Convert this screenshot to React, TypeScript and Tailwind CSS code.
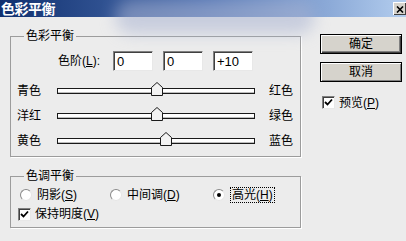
import React from "react";

const font = { fontFamily: "'Liberation Sans', 'Noto Sans CJK SC', sans-serif" };

function U({ c }: { c: string }) {
  return <span className="underline underline-offset-[1px]">{c}</span>;
}

function Input({ v }: { v: string }) {
  return (
    <div className="w-[40px] h-[20px] bg-white border border-t-[#808080] border-l-[#808080] border-b-[#e8e8e8] border-r-[#e8e8e8] shadow-[inset_1px_1px_0_#404040] flex items-center pl-[3px] text-[13px] leading-none text-black">
      {v}
    </div>
  );
}

function Slider({ left, right, value }: { left: string; right: string; value: number }) {
  const w = 198;
  const center = ((value + 100) / 200) * w;
  return (
    <div className="h-[25px] flex items-center">
      <div className="w-[46px] pl-[6px] text-[12px] leading-none">{left}</div>
      <div className="relative w-[198px] h-[13px] flex items-center">
        <div className="w-full h-[6px] bg-white border border-[#1a1a1a] shadow-[inset_0_-1px_0_#bdbdbd]" />
        <svg
          className="absolute top-[-2px]"
          style={{ left: center - 5.5 }}
          width="12"
          height="14"
          viewBox="0 0 12 14"
        >
          <polygon points="0.5,13.5 0.5,5.5 6,0.5 11.5,5.5 11.5,13.5" fill="#f2f2f2" stroke="#1a1a1a" strokeWidth="1" />
        </svg>
      </div>
      <div className="ml-[14px] text-[12px] leading-none">{right}</div>
    </div>
  );
}

function Check() {
  return (
    <div className="w-[13px] h-[13px] bg-white border border-t-[#808080] border-l-[#808080] border-b-[#e8e8e8] border-r-[#e8e8e8] shadow-[inset_1px_1px_0_#404040] flex items-center justify-center">
      <svg width="9" height="9" viewBox="0 0 9 9">
        <path d="M1 4 L3.5 6.5 L8 1.5" fill="none" stroke="#000" strokeWidth="1.8" />
      </svg>
    </div>
  );
}

function Radio({ on }: { on?: boolean }) {
  return (
    <div className="w-[12px] h-[12px] rounded-full bg-white border border-t-[#8a8a8a] border-l-[#8a8a8a] border-b-[#e6e6e6] border-r-[#e6e6e6] flex items-center justify-center">
      {on && <div className="w-[4px] h-[4px] rounded-full bg-black" />}
    </div>
  );
}

function Btn({ label, def }: { label: string; def?: boolean }) {
  return (
    <div
      className={
        "w-[82px] h-[20px] bg-[#d6d3cc] border border-black flex items-center justify-center text-[12px] leading-none " +
        (def
          ? "shadow-[inset_1px_1px_0_#fff,inset_-1px_-1px_0_#404040,inset_-2px_-2px_0_#808080]"
          : "shadow-[inset_1px_1px_0_#fff,inset_-1px_-1px_0_#808080]")
      }
    >
      {label}
    </div>
  );
}

export default function App() {
  return (
    <div className="relative w-[406px] h-[241px] bg-[#ececec] overflow-hidden text-black" style={font}>
      <div className="h-[17px] bg-gradient-to-r from-[#10306f] via-[#4f72b2] to-[#b3cdee] flex items-center justify-between">
        <span className="pl-[1px] text-white font-bold text-[14px] leading-none tracking-[-0.5px]">色彩平衡</span>
        <div className="w-[13px] h-[13px] bg-[#d6d3cc] border-l border-t border-white shadow-[inset_-1px_-1px_0_#404040] flex items-center justify-center">
          <svg width="8" height="7" viewBox="0 0 8 7">
            <path d="M1 0.5 L7 6.5 M7 0.5 L1 6.5" stroke="#000" strokeWidth="1.6" />
          </svg>
        </div>
      </div>

      <div className="flex pl-[10px]">
        <div className="flex flex-col w-[291px]">
          <fieldset className="mt-[12px] border border-[#9c9c9c] shadow-[1px_1px_0_#fff] pb-[3px]">
            <legend className="ml-[13px] px-[2px] text-[12px] leading-[14px]">色彩平衡</legend>
            <div className="mt-[8px] flex items-center">
              <div className="ml-[47px] w-[55px] text-[12px] leading-none">
                色阶(<U c="L" />):
              </div>
              <div className="flex gap-[10px]">
                <Input v="0" />
                <Input v="0" />
                <Input v="+10" />
              </div>
            </div>
            <div className="mt-[7px] flex flex-col">
              <Slider left="青色" right="红色" value={0} />
              <Slider left="洋红" right="绿色" value={0} />
              <Slider left="黄色" right="蓝色" value={10} />
            </div>
          </fieldset>

          <fieldset className="mt-[12px] border border-[#9c9c9c] shadow-[1px_1px_0_#fff] pb-[5px]">
            <legend className="ml-[13px] px-[2px] text-[12px] leading-[14px]">色调平衡</legend>
            <div className="mt-[4px] h-[16px] flex items-center pl-[9px] text-[12px] leading-none">
              <div className="w-[90px] flex items-center gap-[5px]">
                <Radio />
                <span>
                  阴影(<U c="S" />)
                </span>
              </div>
              <div className="w-[103px] flex items-center gap-[5px]">
                <Radio />
                <span>
                  中间调(<U c="D" />)
                </span>
              </div>
              <div className="flex items-center gap-[5px]">
                <Radio on />
                <span className="border border-dotted border-black px-[1px] py-[1px]">
                  高光(<U c="H" />)
                </span>
              </div>
            </div>
            <div className="mt-[3px] h-[16px] flex items-center pl-[7px] gap-[4px] text-[12px] leading-none">
              <Check />
              <span>
                保持明度(<U c="V" />)
              </span>
            </div>
          </fieldset>
        </div>

        <div className="ml-[19px] flex flex-col">
          <div className="mt-[17px]">
            <Btn label="确定" def />
          </div>
          <div className="mt-[8px]">
            <Btn label="取消" />
          </div>
          <div className="mt-[14px] flex items-center gap-[4px] pl-[2px] text-[12px] leading-none">
            <Check />
            <span>
              预览(<U c="P" />)
            </span>
          </div>
        </div>
      </div>

      <div className="absolute left-[115px] top-[0px] w-[200px] h-[34px] rounded-full bg-[#aab4d2] opacity-55 blur-[8px] pointer-events-none" />
    </div>
  );
}
